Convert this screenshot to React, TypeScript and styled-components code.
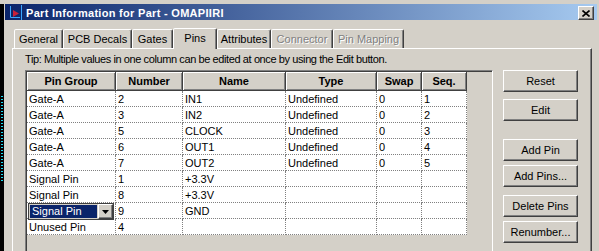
import React from "react";
import styled, { createGlobalStyle } from "styled-components";

const GlobalStyle = createGlobalStyle`
  html, body {
    margin: 0;
    padding: 0;
    background: #d4d0c8;
  }
  body {
    font-family: "Liberation Sans", Arial, sans-serif;
    font-size: 11px;
    color: #000;
  }
`;

const Screen = styled.div`
  width: 599px;
  height: 251px;
  overflow: hidden;
  display: flex;
  padding-top: 4px;
  box-sizing: border-box;
  background: #d4d0c8;
`;

// bit of the desktop showing on the left
const Desktop = styled.div`
  width: 4px;
  flex: none;
  background: #000;
  display: flex;
  flex-direction: column;
`;

const DesktopDots = styled.div`
  margin: 92px 0 0 1px;
  width: 2px;
  height: 86px;
  background: repeating-linear-gradient(
    to bottom,
    #18d8f0 0 1px,
    transparent 1px 3px
  );
`;

const Window = styled.div`
  flex: 1;
  min-width: 0;
  display: flex;
  flex-direction: column;
`;

const TitleBar = styled.div`
  height: 20px;
  margin: 0 2px 0 1px;
  padding: 0 3px;
  display: flex;
  align-items: center;
  gap: 2px;
  background: linear-gradient(to right, #0a246a, #a6caf0);
`;

const Title = styled.span`
  flex: 1;
  padding-top: 2px;
  color: #fff;
  font-weight: bold;
  line-height: 14px;
  letter-spacing: 0.3px;
  white-space: nowrap;
`;

const CloseButton = styled.div`
  width: 16px;
  height: 14px;
  margin-top: 2px;
  box-sizing: border-box;
  border: 1px solid;
  border-color: #fff #404040 #404040 #fff;
  box-shadow: inset -1px -1px #808080;
  background: #d4d0c8;
  display: flex;
  align-items: center;
  justify-content: center;
`;

const TabStrip = styled.div`
  display: flex;
  align-items: flex-end;
  height: 20px;
  margin-top: 8px;
  padding-left: 10px;
  position: relative;
  z-index: 1;
`;

const Tab = styled.div<{ $w: number; $active?: boolean; $disabled?: boolean }>`
  width: ${(p) => p.$w}px;
  height: ${(p) => (p.$active ? 21 : 19)}px;
  margin-bottom: ${(p) => (p.$active ? -1 : 0)}px;
  box-sizing: border-box;
  border: 1px solid;
  border-bottom: none;
  border-color: #fff #404040 transparent #fff;
  border-radius: 2px 2px 0 0;
  box-shadow: inset -1px 0 #808080;
  background: #d4d0c8;
  padding-top: 2px;
  line-height: 14px;
  text-align: center;
  white-space: nowrap;
  color: ${(p) => (p.$disabled ? "#808080" : "#000")};
  text-shadow: ${(p) => (p.$disabled ? "1px 1px 0 #fff" : "none")};
`;

const Panel = styled.div`
  flex: 1;
  margin: 0 7px 0 8px;
  border: 1px solid;
  border-color: #fff #404040 #404040 #fff;
  box-shadow: inset -1px -1px #808080;
  display: flex;
  flex-direction: column;
`;

const Tip = styled.div`
  margin: 3px 0 0 12px;
  line-height: 14px;
  letter-spacing: -0.4px;
  white-space: nowrap;
`;

const Body = styled.div`
  display: flex;
  gap: 10px;
  margin-top: 4px;
  padding-left: 12px;
`;

const Grid = styled.div`
  width: 468px;
  height: 200px;
  flex: none;
  box-sizing: border-box;
  border: 1px solid;
  border-color: #808080 #fff #fff #808080;
  box-shadow: inset 1px 1px #404040, inset -1px -1px #d4d0c8;
  background: #d4d0c8;
  padding: 1px;
`;

const Table = styled.div`
  display: grid;
  grid-template-columns: 89px 67px 103px 91px 45px 45px;
  width: max-content;
`;

const HeaderCell = styled.div`
  height: 19px;
  box-sizing: border-box;
  border-right: 1px solid #404040;
  border-bottom: 1px solid #404040;
  box-shadow: inset 1px 1px #fff, inset -1px -1px #808080;
  padding-top: 2px;
  line-height: 14px;
  font-weight: bold;
  text-align: center;
  white-space: nowrap;
`;

const Cell = styled.div`
  position: relative;
  height: 16px;
  box-sizing: border-box;
  background: #fff;
  border-right: 1px dotted #808080;
  border-bottom: 1px dotted #808080;
  padding: 1px 0 0 2px;
  line-height: 14px;
  white-space: nowrap;
`;

// in-place editor floating over the cell being edited
const Combo = styled.div`
  position: absolute;
  left: 1px;
  top: 0;
  width: 86px;
  height: 17px;
  box-sizing: border-box;
  border: 1px solid #404040;
  background: #d4d0c8;
  display: flex;
  z-index: 1;
`;

const ComboValue = styled.div`
  flex: 1;
  margin: 1px;
  padding-left: 2px;
  background: #0a246a;
  color: #fff;
  line-height: 13px;
`;

const ComboArrow = styled.div`
  width: 15px;
  box-sizing: border-box;
  border: 1px solid;
  border-color: #fff #404040 #404040 #fff;
  box-shadow: inset -1px -1px #808080;
  display: flex;
  align-items: center;
  justify-content: center;
`;

const ButtonColumn = styled.div`
  display: flex;
  flex-direction: column;
  width: 75px;
`;

const PushButton = styled.button<{ $gap: number }>`
  margin: ${(p) => p.$gap}px 0 0;
  height: 22px;
  padding: 0;
  box-sizing: border-box;
  border: 1px solid;
  border-color: #fff #404040 #404040 #fff;
  box-shadow: inset -1px -1px #808080;
  background: #d4d0c8;
  font: inherit;
  color: #000;
  line-height: 14px;
`;

const tabs = [
  { label: "General", w: 49 },
  { label: "PCB Decals", w: 69 },
  { label: "Gates", w: 41 },
  { label: "Pins", w: 44, active: true },
  { label: "Attributes", w: 54 },
  { label: "Connector", w: 62, disabled: true },
  { label: "Pin Mapping", w: 71, disabled: true },
];

const columns = ["Pin Group", "Number", "Name", "Type", "Swap", "Seq."];

const rows = [
  ["Gate-A", "2", "IN1", "Undefined", "0", "1"],
  ["Gate-A", "3", "IN2", "Undefined", "0", "2"],
  ["Gate-A", "5", "CLOCK", "Undefined", "0", "3"],
  ["Gate-A", "6", "OUT1", "Undefined", "0", "4"],
  ["Gate-A", "7", "OUT2", "Undefined", "0", "5"],
  ["Signal Pin", "1", "+3.3V", "", "", ""],
  ["Signal Pin", "8", "+3.3V", "", "", ""],
  ["Signal Pin", "9", "GND", "", "", ""],
  ["Unused Pin", "4", "", "", "", ""],
];
const editingRow = 7;

const buttons = [
  { label: "Reset", gap: 0 },
  { label: "Edit", gap: 7 },
  { label: "Add Pin", gap: 18 },
  { label: "Add Pins...", gap: 4 },
  { label: "Delete Pins", gap: 8 },
  { label: "Renumber...", gap: 4 },
];

const PartIcon = () => (
  <svg width="16" height="16" viewBox="0 0 16 16">
    <path d="M2.5 2v11.5H12" stroke="#3aa6ff" fill="none" />
    <path d="M13.5 1v15" stroke="#3aa6ff" fill="none" />
    <polygon points="5,6 11,9.5 5,13" fill="#c8203a" />
  </svg>
);

const CloseGlyph = () => (
  <svg width="8" height="7" viewBox="0 0 8 7">
    <path d="M0.5 0.5l7 6M7.5 0.5l-7 6" stroke="#000" strokeWidth="1.6" />
  </svg>
);

const DownGlyph = () => (
  <svg width="7" height="4" viewBox="0 0 7 4">
    <polygon points="0,0 7,0 3.5,4" fill="#000" />
  </svg>
);

export default function App() {
  return (
    <Screen>
      <GlobalStyle />
      <Desktop>
        <DesktopDots />
      </Desktop>
      <Window>
        <TitleBar>
          <PartIcon />
          <Title>Part Information for Part - OMAPIIRI</Title>
          <CloseButton>
            <CloseGlyph />
          </CloseButton>
        </TitleBar>
        <TabStrip>
          {tabs.map((t) => (
            <Tab key={t.label} $w={t.w} $active={t.active} $disabled={t.disabled}>
              {t.label}
            </Tab>
          ))}
        </TabStrip>
        <Panel>
          <Tip>
            Tip: Multiple values in one column can be edited at once by using the
            Edit button.
          </Tip>
          <Body>
            <Grid>
              <Table>
                {columns.map((c) => (
                  <HeaderCell key={c}>{c}</HeaderCell>
                ))}
                {rows.map((r, i) =>
                  r.map((v, j) => (
                    <Cell key={`${i}-${j}`}>
                      {i === editingRow && j === 0 ? (
                        <Combo>
                          <ComboValue>{v}</ComboValue>
                          <ComboArrow>
                            <DownGlyph />
                          </ComboArrow>
                        </Combo>
                      ) : (
                        v
                      )}
                    </Cell>
                  ))
                )}
              </Table>
            </Grid>
            <ButtonColumn>
              {buttons.map((b) => (
                <PushButton key={b.label} $gap={b.gap}>
                  {b.label}
                </PushButton>
              ))}
            </ButtonColumn>
          </Body>
        </Panel>
      </Window>
    </Screen>
  );
}
